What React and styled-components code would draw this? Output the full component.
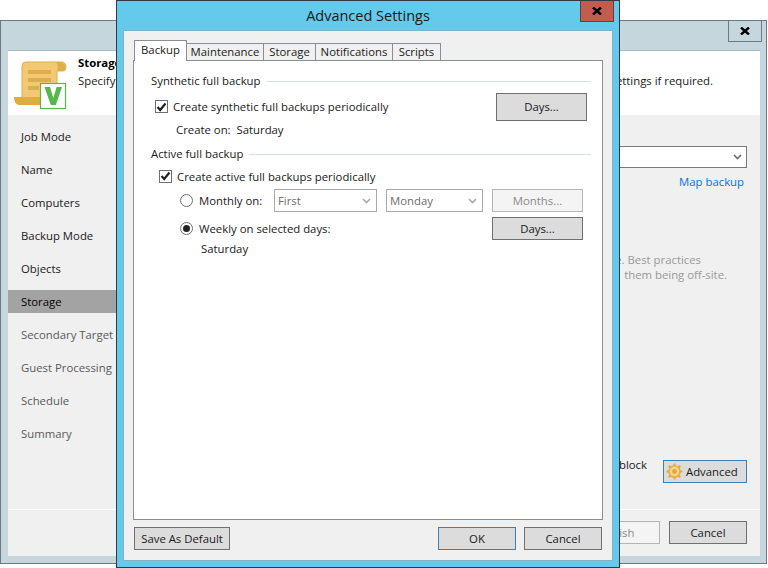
import React from 'react';
import styled, { createGlobalStyle } from 'styled-components';

const Global = createGlobalStyle`
  html, body { margin: 0; padding: 0; background: #fff; }
  body { width: 768px; height: 568px; overflow: hidden; position: relative; font-family: "Open Sans", "Noto Sans", "Liberation Sans", sans-serif; font-size: 11.35px; color: #1a1a1a; }
  #root { width: 768px; height: 568px; }
`;

const Desktop = styled.div`position: relative; width: 768px; height: 568px; overflow: hidden;`;

const MainWindow = styled.div`
  position: absolute; left: 0; top: 20px; width: 767px; height: 544px; box-sizing: border-box;
  border: 1px solid #6d7a82; background: #c5d6dc; padding: 30px 6px 7px 7px;
`;
const WinClose = styled.div`
  position: absolute; top: 0; right: ${p => p.$right}px; width: ${p => p.$w}px; height: 21px; box-sizing: border-box;
  display: flex; align-items: center; justify-content: center;
  border: 1px solid ${p => p.$bd}; border-top: none; background: ${p => p.$bg};
`;
const Client = styled.div`
  height: 100%; display: flex; flex-direction: column; background: #f0f0f0; box-shadow: 0 -1px 0 #a9bcc4;
`;
const Header = styled.div`
  height: 64px; flex: none; background: #fff; position: relative; padding: 3px 47px 0 70px; box-sizing: border-box;
`;
const HeaderText = styled.div`display: flex; flex-direction: column; gap: 1px; line-height: 17px; white-space: nowrap;`;
const HeaderLine = styled.div`display: flex; justify-content: space-between;`;
const Bold = styled.div`font-weight: 700; color: #000;`;
const LogoBox = styled.svg`position: absolute; left: 6px; top: 10px;`;
const Body = styled.div`flex: 1; display: flex; min-height: 0;`;
const Nav = styled.div`width: 160px; flex: none; padding-top: 10px; box-sizing: border-box;`;
const NavItem = styled.div`
  height: 23px; line-height: 23px; margin-bottom: 10px; padding-left: 13px; white-space: nowrap;
  background: ${p => p.$active ? '#a3a3a3' : 'transparent'};
  color: ${p => p.$active ? '#000' : p.$muted ? '#5a5a5a' : '#1a1a1a'};
`;
const RightPane = styled.div`flex: 1; position: relative; display: flex; flex-direction: column; align-items: flex-end; padding: 31px 13px 0 0;`;
const MainSelect = styled.div`
  width: 400px; height: 22px; box-sizing: border-box; border: 1px solid #7a7a7a; background: #fff;
  display: flex; justify-content: flex-end; align-items: center; padding-right: 4px;
`;
const LinkText = styled.div`color: #0a6ee8; line-height: 16px; margin: 6px 3px 0 0;`;
const HintLine = styled.div`color: #999; line-height: 15px; white-space: nowrap; padding-right: ${p => p.$pr}px; margin-top: ${p => p.$mt || 0}px;`;
const AdvRow = styled.div`display: flex; align-items: flex-start; margin-top: 178px;`;
const BlockText = styled.div`line-height: 16px; margin: -3px 16px 0 0; white-space: nowrap;`;
const Footer = styled.div`
  height: 47px; flex: none; border-top: 1px solid #fff; box-sizing: border-box; display: flex; justify-content: flex-end; gap: 9px; padding: 11px 13px 0 0;
`;
const Btn = styled.div`
  height: ${p => p.$h || 23}px; width: ${p => p.$w}px; box-sizing: border-box; flex: none;
  display: flex; align-items: center; justify-content: center; gap: 3px;
  border: 1px solid ${p => p.$primary ? '#3f7fb0' : p.$disabled ? '#b5b5b5' : '#707070'};
  background: ${p => p.$disabled ? '#f4f4f4' : '#dcdcdc'};
  color: ${p => p.$disabled ? '#8a8a8a' : '#1a1a1a'};
  white-space: nowrap;
  margin-right: ${p => p.$mr || 0}px;
`;
const IconBtn = styled(Btn)`justify-content: flex-start; padding-left: 2px;`;

const Dialog = styled.div`
  position: absolute; left: 116px; top: 0; width: 504px; height: 568px; box-sizing: border-box;
  border: 1px solid #2f3a40; background: #65c9ec; padding: 30px 7px 7px 7px; display: flex; flex-direction: column;
`;
const Title = styled.div`
  position: absolute; left: 0; right: 0; top: 4px; text-align: center; font-size: 14.5px; line-height: 22px; color: #1a1a1a;
`;
const DlgClient = styled.div`flex: 1; background: #f0f0f0; box-shadow: 0 -1px 0 #7fb2c8, 0 1px 0 #7fb2c8, 1px 0 0 #7fb2c8, -1px 0 0 #7fb2c8; padding: 9px 9px 0 9px; display: flex; flex-direction: column; min-height: 0;`;
const TabBar = styled.div`display: flex; align-items: flex-end; height: 21px; padding-left: 1px; position: relative; z-index: 1;`;
const Tab = styled.div`
  box-sizing: border-box; width: ${p => p.$w}px; height: ${p => p.$active ? 21 : 18}px; border: 1px solid #8a8f96; margin-left: ${p => p.$active ? 0 : -1}px;
  border-bottom: ${p => p.$active ? 'none' : '1px solid #8a8f96'};
  background: ${p => p.$active ? '#fff' : '#f0f0f0'}; text-align: center; line-height: ${p => p.$active ? 18 : 16}px; position: relative; z-index: ${p => p.$active ? 2 : 0};
  &:first-child { margin-left: 0; }
`;
const Panel = styled.div`
  flex: none; height: 460px; margin-top: -1px; box-sizing: border-box; border: 1px solid #8a8f96; background: #fff; padding: 12px 11px 0 17px;
`;
const GroupHead = styled.div`display: flex; align-items: center; gap: 6px; line-height: 16px; margin-top: ${p => p.$mt || 0}px;`;
const Rule = styled.div`flex: 1; height: 1px; background: #d5dfe5;`;
const Row = styled.div`display: flex; align-items: center; height: ${p => p.$h}px; margin-top: ${p => p.$mt || 0}px; margin-left: ${p => p.$ml || 0}px;`;
const Check = styled.div`width: 13px; height: 13px; box-sizing: border-box; border: 1px solid #6f6f6f; margin-right: 5px; flex: none; display: flex; align-items: center; justify-content: center;`;
const Radio = styled.div`
  width: 13px; height: 13px; box-sizing: border-box; border: 1px solid #6f6f6f; border-radius: 50%; margin-right: 6px; flex: none; position: relative;
  ${p => p.$on && `&::after { content: ""; position: absolute; left: 2px; top: 2px; width: 7px; height: 7px; border-radius: 50%; background: #222; }`}
`;
const Spacer = styled.div`flex: 1;`;
const FieldLabel = styled.span`width: 75px; flex: none;`;
const SelectBox = styled.div`
  width: ${p => p.$w}px; height: 23px; box-sizing: border-box; border: 1px solid #a9a9a9; display: flex; align-items: center; justify-content: space-between; padding: 0 5px 0 3px; color: #6d6d6d; flex: none; margin-right: 9px;
`;
const Plain = styled.div`line-height: 16px; white-space: nowrap; margin: 1px 0 0 50px;`;
const DlgFooter = styled.div`display: flex; align-items: flex-start; margin: 7px 1px 0 1px; gap: 8px;`;

const Chev = ({ c = '#6d6d6d' }) => (
  <svg width="9" height="6" viewBox="0 0 9 6"><path d="M1 1 L4.5 4.5 L8 1" fill="none" stroke={c} strokeWidth="1.6" /></svg>
);
const XMark = () => (
  <svg width="10" height="8" viewBox="0 0 10 8"><path d="M1 .5 L9 7.5 M9 .5 L1 7.5" stroke="#000" strokeWidth="2.4" /></svg>
);
const Tick = () => (
  <svg width="11" height="10" viewBox="0 0 11 10"><path d="M1.5 5 L4.2 8 L9.5 1.5" fill="none" stroke="#222" strokeWidth="2.2" /></svg>
);
const Logo = () => (
  <LogoBox width="54" height="54" viewBox="0 0 54 54">
    <path d="M8 5 Q8 1 12 1 L47 1 Q52 1 52 6 Q52 10 49 10 L43 10 L43 38 L8 38 Z" fill="#f3c875" stroke="#dfae4a" strokeWidth="1" />
    <path d="M42 1 Q45 5 43 10 L50 10 Q52 7 51 4 Q49 1 42 1 Z" fill="#dfae4a" />
    <path d="M0 36 L30 36 L30 44 L5 44 Q0 43 0 36 Z" fill="#dcae42" />
    <rect x="14" y="9" width="23" height="4" fill="#dfae4a" />
    <rect x="14" y="17" width="23" height="4" fill="#dfae4a" />
    <rect x="14" y="25" width="11" height="4" fill="#dfae4a" />
    <rect x="26.5" y="22.5" width="25" height="25" fill="#fff" stroke="#55b848" strokeWidth="1.2" />
    <path d="M30.5 26 L36 26 L39.3 37 L42.6 26 L48 26 L41.8 44 L36.8 44 Z" fill="#55b848" />
  </LogoBox>
);
const Gear = () => (
  <svg width="17" height="17" viewBox="0 0 17 17">
    <g stroke="#e5a93a" strokeWidth="2">
      <path d="M8.5 .5 V16.5 M.5 8.5 H16.5 M2.8 2.8 L14.2 14.2 M14.2 2.8 L2.8 14.2" />
    </g>
    <circle cx="8.5" cy="8.5" r="5.6" fill="#f4d48a" stroke="#e5a93a" strokeWidth="1.4" />
    <circle cx="8.5" cy="8.5" r="2.4" fill="#e5a93a" />
  </svg>
);

export default function App() {
  const nav = ['Job Mode', 'Name', 'Computers', 'Backup Mode', 'Objects'];
  const muted = ['Secondary Target', 'Guest Processing', 'Schedule', 'Summary'];
  return (
    <Desktop>
      <Global />
      <MainWindow>
        <WinClose $right={4} $w={34} $bd="#6d7a82" $bg="#c5d6dc"><XMark /></WinClose>
        <Client>
          <Header>
            <Logo />
            <HeaderText>
              <Bold>Storage</Bold>
              <HeaderLine>
                <span>Specify</span>
                <span>settings if required.</span>
              </HeaderLine>
            </HeaderText>
          </Header>
          <Body>
            <Nav>
              {nav.map(n => <NavItem key={n}>{n}</NavItem>)}
              <NavItem $active>Storage</NavItem>
              {muted.map(n => <NavItem key={n} $muted>{n}</NavItem>)}
            </Nav>
            <RightPane>
              <MainSelect><Chev /></MainSelect>
              <LinkText>Map backup</LinkText>
              <HintLine $pr={46} $mt={62}>site. Best practices</HintLine>
              <HintLine $pr={20}>them being off-site.</HintLine>
              <AdvRow>
                <BlockText>block</BlockText>
                <IconBtn $primary $w={84}><Gear />Advanced</IconBtn>
              </AdvRow>
            </RightPane>
          </Body>
          <Footer>
            <Btn $disabled $w={82}>Finish</Btn>
            <Btn $w={78}>Cancel</Btn>
          </Footer>
        </Client>
      </MainWindow>

      <Dialog>
        <Title>Advanced Settings</Title>
        <WinClose $right={5} $w={34} $bd="#6f3a35" $bg="#c25b50"><XMark /></WinClose>
        <DlgClient>
          <TabBar>
            <Tab $active $w={53}>Backup</Tab>
            <Tab $w={78}>Maintenance</Tab>
            <Tab $w={53}>Storage</Tab>
            <Tab $w={78}>Notifications</Tab>
            <Tab $w={49}>Scripts</Tab>
          </TabBar>
          <Panel>
            <GroupHead>Synthetic full backup<Rule /></GroupHead>
            <Row $h={23} $mt={6} $ml={4}>
              <Check><Tick /></Check>Create synthetic full backups periodically<Spacer />
              <Btn $w={91} $h={28} $mr={4}>Days...</Btn>
            </Row>
            <Row $h={16} $mt={3} $ml={25}>Create on:&nbsp;&nbsp;Saturday</Row>
            <GroupHead $mt={9}>Active full backup<Rule /></GroupHead>
            <Row $h={16} $mt={6} $ml={8}>
              <Check><Tick /></Check>Create active full backups periodically
            </Row>
            <Row $h={23} $mt={5} $ml={29}>
              <Radio />
              <FieldLabel>Monthly on:</FieldLabel>
              <SelectBox $w={103}>First<Chev c="#a8a8a8" /></SelectBox>
              <SelectBox $w={97}>Monday<Chev c="#a8a8a8" /></SelectBox>
              <Btn $disabled $w={91}>Months...</Btn>
            </Row>
            <Row $h={23} $mt={5} $ml={29}>
              <Radio $on />
              Weekly on selected days:<Spacer />
              <Btn $w={91} $mr={8}>Days...</Btn>
            </Row>
            <Plain>Saturday</Plain>
          </Panel>
          <DlgFooter>
            <Btn $w={96}>Save As Default</Btn>
            <Spacer />
            <Btn $primary $w={78}>OK</Btn>
            <Btn $w={78}>Cancel</Btn>
          </DlgFooter>
        </DlgClient>
      </Dialog>
    </Desktop>
  );
}
